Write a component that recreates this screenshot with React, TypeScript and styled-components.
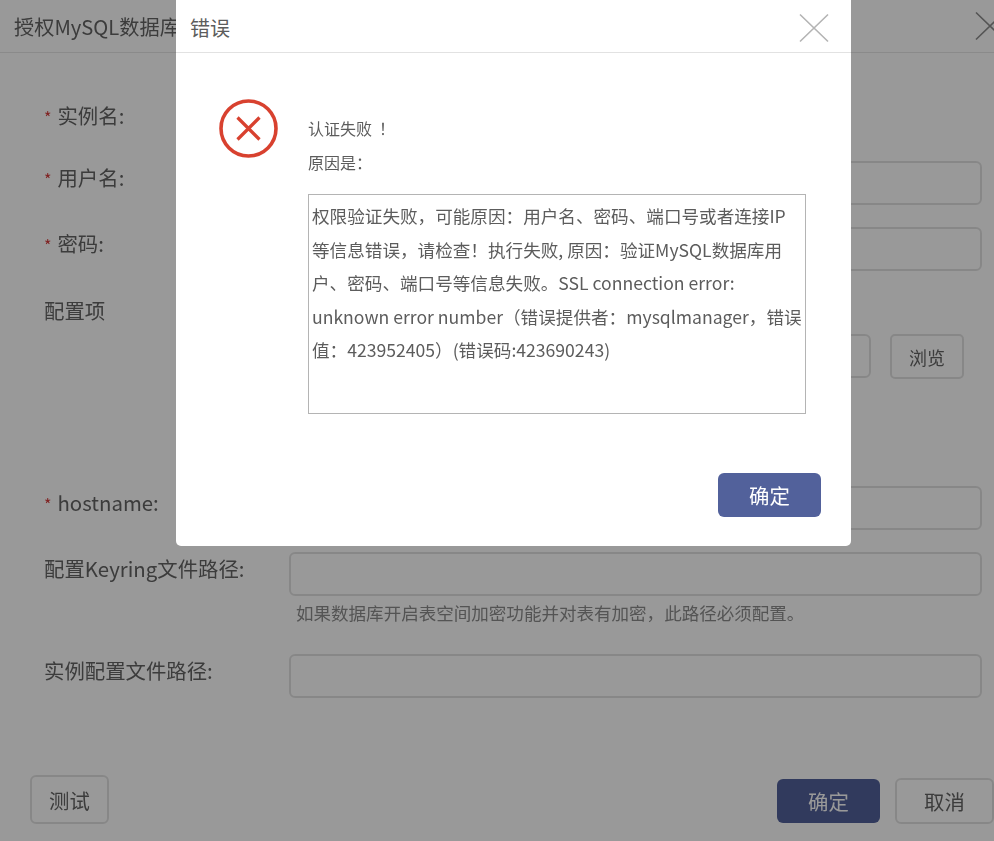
import React from 'react'
import styled, { createGlobalStyle } from 'styled-components'

const GlobalStyle = createGlobalStyle`
    html, body {
        margin: 0;
        padding: 0;
        height: 841px;
        overflow: hidden;
        background: #fff;
    }

    body {
        font-family: "Noto Sans CJK SC", "Noto Sans", sans-serif;
        color: #646464;
    }

    * {
        box-sizing: border-box;
    }
`

const Screen = styled.div`
    position: relative;
    width: 994px;
    height: 841px;
    overflow: hidden;
    filter: blur(0.45px);
`

const Sheet = styled.div`
    display: flex;
    flex-direction: column;
    height: 100%;
`

const SheetHeader = styled.header`
    display: flex;
    align-items: center;
    justify-content: space-between;
    flex: none;
    height: 53px;
    padding-left: 14px;
    border-bottom: 1px solid #e6e6e6;
    font-size: 20.2px;
    white-space: nowrap;
`

const CloseIcon = styled.svg<{ $color: string; $shift: number }>`
    flex: none;
    width: 30px;
    height: 30px;
    margin-right: ${p => p.$shift}px;
    fill: none;
    stroke: ${p => p.$color};
    stroke-width: 1.6;
`

const Form = styled.div`
    display: flex;
    flex-direction: column;
    padding: 46px 12px 0 44px;
`

const Row = styled.div<{ $top: number }>`
    display: flex;
    align-items: flex-start;
    margin-top: ${p => p.$top}px;
`

const Label = styled.label`
    flex: none;
    width: 245px;
    height: 44px;
    line-height: 32px;
    font-size: 20.4px;
    white-space: nowrap;
`

const Star = styled.span`
    margin-right: 6px;
    font-size: 16px;
    color: #d63a3a;
`

const Field = styled.div`
    flex: 1;
    display: flex;
    flex-direction: column;
    min-width: 0;
`

const Input = styled.div`
    height: 44px;
    border: 2px solid #e2e2e2;
    border-radius: 6px;
`

const Hint = styled.div`
    margin-top: 4px;
    padding-left: 7px;
    height: 26px;
    line-height: 26px;
    font-size: 17.55px;
    color: #8c8c8c;
    white-space: nowrap;
`

const BrowseField = styled.div`
    display: flex;
    gap: 19px;
    padding-right: 18px;
`

const BrowseInput = styled(Input)`
    flex: 1;
`

const BrowseButton = styled.div`
    flex: none;
    display: flex;
    align-items: center;
    justify-content: center;
    width: 74px;
    height: 45px;
    border: 2px solid #e2e2e2;
    border-radius: 5px;
    font-size: 18px;
`

const Footer = styled.footer`
    display: flex;
    align-items: center;
    justify-content: space-between;
    margin-top: auto;
    padding: 0 0 17px 30px;
`

const FooterRight = styled.div`
    display: flex;
    align-items: center;
    gap: 15px;
    margin-top: 2px;
`

const Button = styled.div<{ $width: number; $height: number; $primary?: boolean }>`
    display: flex;
    align-items: center;
    justify-content: center;
    width: ${p => p.$width}px;
    height: ${p => p.$height}px;
    border: ${p => (p.$primary ? 'none' : '2px solid #e2e2e2')};
    border-radius: 6px;
    background: ${p => (p.$primary ? '#52619b' : 'transparent')};
    color: ${p => (p.$primary ? '#fff' : '#646464')};
    font-size: 20.4px;
`

const Overlay = styled.div`
    position: absolute;
    inset: 0;
    background: rgba(0, 0, 0, 0.4);
`

const Modal = styled.div`
    position: absolute;
    top: 0;
    left: 176px;
    display: flex;
    flex-direction: column;
    width: 675px;
    height: 546px;
    background: #fff;
    border-radius: 0 0 5px 5px;
`

const ModalHeader = styled.header`
    display: flex;
    align-items: center;
    justify-content: space-between;
    flex: none;
    height: 53px;
    padding: 3px 22px 0 14px;
    border-bottom: 1px solid #e2e2e2;
    font-size: 20px;
    color: #5c5c5c;
`

const ModalBody = styled.div`
    display: flex;
    flex: 1;
    padding: 46px 45px 0 43px;
`

const ErrorIcon = styled.svg`
    flex: none;
    width: 59px;
    height: 59px;
    fill: none;
    stroke: #d8412f;
`

const Message = styled.div`
    flex: 1;
    margin-left: 30px;
    padding-top: 16px;
    font-size: 16px;
    color: #5c5c5c;
`

const MessageLine = styled.p`
    margin: 0;
    height: 34px;
    line-height: 26px;
`

const Bang = styled.span`
    margin-left: 7px;
`

const Detail = styled.div`
    width: 498px;
    height: 220px;
    margin-top: 11px;
    padding: 4px 3px 0 3px;
    border: 1px solid #b4b4b4;
    font-size: 17.6px;
    line-height: 33.5px;
    color: #5c5c5c;
`

const ModalFooter = styled.footer`
    display: flex;
    justify-content: flex-end;
    flex: none;
    padding: 0 30px 29px 0;
`

function CloseGlyph({ color, shift }: { color: string; shift: number }) {
    return (
        <CloseIcon $color={color} $shift={shift} viewBox="0 0 30 30">
            <path d="M1 1.5 L29 28.5 M29 1.5 L1 28.5" />
        </CloseIcon>
    )
}

function App() {
    return (
        <Screen>
            <GlobalStyle />

            <Sheet>
                <SheetHeader>
                    授权MySQL数据库
                    <CloseGlyph color="#8c8c8c" shift={-11} />
                </SheetHeader>

                <Form>
                    <Row $top={0}>
                        <Label><Star>*</Star>实例名:</Label>
                    </Row>

                    <Row $top={18}>
                        <Label><Star>*</Star>用户名:</Label>
                        <Field><Input /></Field>
                    </Row>

                    <Row $top={22}>
                        <Label><Star>*</Star>密码:</Label>
                        <Field><Input /></Field>
                    </Row>

                    <Row $top={23}>
                        <Label>配置项</Label>
                    </Row>

                    <Row $top={-4}>
                        <Label />
                        <Field>
                            <BrowseField>
                                <BrowseInput />
                                <BrowseButton>浏览</BrowseButton>
                            </BrowseField>
                        </Field>
                    </Row>

                    <Row $top={107}>
                        <Label><Star>*</Star>hostname:</Label>
                        <Field><Input /></Field>
                    </Row>

                    <Row $top={22}>
                        <Label>配置Keyring文件路径:</Label>
                        <Field>
                            <Input />
                            <Hint>如果数据库开启表空间加密功能并对表有加密，此路径必须配置。</Hint>
                        </Field>
                    </Row>

                    <Row $top={28}>
                        <Label>实例配置文件路径:</Label>
                        <Field><Input /></Field>
                    </Row>
                </Form>

                <Footer>
                    <Button $width={79} $height={49}>测试</Button>
                    <FooterRight>
                        <Button $width={103} $height={44} $primary>确定</Button>
                        <Button $width={99} $height={46}>取消</Button>
                    </FooterRight>
                </Footer>
            </Sheet>

            <Overlay />

            <Modal>
                <ModalHeader>
                    错误
                    <CloseGlyph color="#b4b4b4" shift={0} />
                </ModalHeader>

                <ModalBody>
                    <ErrorIcon viewBox="0 0 59 59">
                        <circle cx="29.5" cy="29.5" r="27.5" strokeWidth="3.6" />
                        <path d="M18.5 18.5 L40.5 40.5 M40.5 18.5 L18.5 40.5" strokeWidth="3.2" />
                    </ErrorIcon>

                    <Message>
                        <MessageLine>认证失败<Bang>！</Bang></MessageLine>
                        <MessageLine>原因是：</MessageLine>
                        <Detail>
                            权限验证失败，可能原因：用户名、密码、端口号或者连接IP等信息错误，请检查！执行失败, 原因：验证MySQL数据库用户、密码、端口号等信息失败。SSL connection error: unknown error number（错误提供者：mysqlmanager，错误值：423952405）(错误码:423690243)
                        </Detail>
                    </Message>
                </ModalBody>

                <ModalFooter>
                    <Button $width={103} $height={44} $primary>确定</Button>
                </ModalFooter>
            </Modal>
        </Screen>
    )
}

export default App
